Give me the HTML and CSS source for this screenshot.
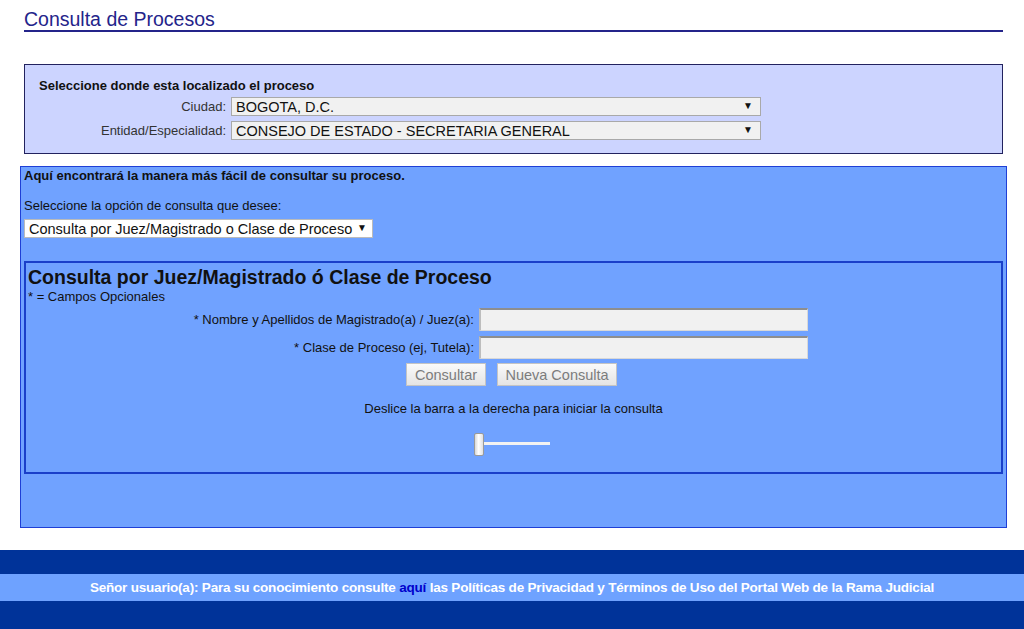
FILE: index.html
```html
<!DOCTYPE html>
<html lang="es">

<head>
    <meta charset="UTF-8">
    <meta name="viewport" content="width=device-width, initial-scale=1.0">
    <title>Consulta de Procesos</title>
    <link rel="stylesheet" href="styles.css">
</head>

<body>
    <div class="page">
        <h1 class="page-title">Consulta de Procesos</h1>

        <div class="location-box">
            <div class="location-title">Seleccione donde esta localizado el proceso</div>
            <div class="location-grid">
                <label for="ciudad">Ciudad:</label>
                <div class="select-wrap">
                    <select id="ciudad" class="big-select">
                        <option>BOGOTA, D.C.</option>
                    </select>
                </div>
                <label for="entidad">Entidad/Especialidad:</label>
                <div class="select-wrap">
                    <select id="entidad" class="big-select">
                        <option>CONSEJO DE ESTADO - SECRETARIA GENERAL</option>
                    </select>
                </div>
            </div>
        </div>

        <div class="query-box">
            <div class="query-intro">Aquí encontrará la manera más fácil de consultar su proceso.</div>
            <div class="query-option">Seleccione la opción de consulta que desee:</div>
            <div class="select-wrap option-wrap">
                <select class="option-select">
                    <option>Consulta por Juez/Magistrado o Clase de Proceso</option>
                </select>
            </div>

            <div class="judge-panel">
                <h2 class="judge-title">Consulta por Juez/Magistrado ó Clase de Proceso</h2>
                <div class="optional-note">* = Campos Opcionales</div>
                <div class="judge-grid">
                    <label for="nombre">* Nombre y Apellidos de Magistrado(a) / Juez(a):</label>
                    <input type="text" id="nombre">
                    <label for="clase">* Clase de Proceso (ej, Tutela):</label>
                    <input type="text" id="clase">
                </div>
                <div class="judge-actions">
                    <button type="button" disabled>Consultar</button>
                    <button type="button" disabled>Nueva Consulta</button>
                </div>
                <div class="slide-hint">Deslice la barra a la derecha para iniciar la consulta</div>
                <div class="slider">
                    <div class="slider-track"></div>
                    <div class="slider-thumb"></div>
                </div>
            </div>
        </div>
    </div>

    <div class="footer">
        <div class="footer-band"></div>
        <div class="footer-note">Señor usuario(a): Para su conocimiento consulte <a href="#">aquí</a> las Políticas de Privacidad y Términos de Uso del Portal Web de la Rama Judicial</div>
        <div class="footer-band bottom"></div>
    </div>
</body>

</html>
```

FILE: styles.css
```css
body {
    margin: 0;
    font-family: "Liberation Sans", Arial, sans-serif;
    font-size: 13px;
    color: #111;
    background-color: #ffffff;
}

.page {
    padding: 0 17px 0 20px;
}

.page-title {
    margin: 0 4px;
    padding-top: 9px;
    font-size: 19.5px;
    line-height: 21px;
    font-weight: normal;
    color: #24248a;
    border-bottom: 2px solid #24248a;
}

.location-box {
    margin: 32px 4px 0;
    padding: 14px 14px 13px;
    background-color: #ccd4ff;
    border: 1px solid #22225e;
}

.location-title {
    font-weight: bold;
    line-height: 14px;
    margin-bottom: 4px;
}

.location-grid {
    display: grid;
    grid-template-columns: 187px 530px;
    column-gap: 5px;
    row-gap: 5px;
    align-items: center;
}

.location-grid label {
    text-align: right;
    color: #333;
}

.select-wrap {
    position: relative;
}

.select-wrap::after {
    content: "\25BC";
    position: absolute;
    right: 8px;
    top: 3px;
    font-size: 10px;
    color: #111;
    pointer-events: none;
}

select {
    -webkit-appearance: none;
    appearance: none;
    font-family: "Liberation Sans", Arial, sans-serif;
    color: #111;
    background-color: #f1f1f1;
    border: 1px solid #a9a9a9;
    border-radius: 0;
}

.big-select {
    width: 100%;
    height: 19px;
    font-size: 14.5px;
    padding: 0 4px;
}

.query-box {
    margin-top: 12px;
    height: 358px;
    padding: 2px 3px 0;
    background-color: #70a2ff;
    border: 1px solid #1f3fd6;
}

.query-intro {
    font-weight: bold;
    line-height: 14px;
}

.query-option {
    margin-top: 16px;
    line-height: 14px;
}

.option-wrap {
    width: 349px;
    margin-top: 6px;
}

.option-wrap::after {
    right: 6px;
}

.option-select {
    width: 100%;
    height: 19px;
    font-size: 14.5px;
    padding: 0 4px;
    background-color: #ffffff;
    border-color: #bbb;
}

.judge-panel {
    margin-top: 23px;
    height: 209px;
    padding: 0 2px;
    border: 2px solid #1a3fc9;
}

.judge-title {
    margin: 2px 0 0;
    font-size: 19.5px;
    line-height: 24px;
    color: #111;
}

.optional-note {
    margin-top: 1px;
    line-height: 14px;
}

.judge-grid {
    display: grid;
    grid-template-columns: 446px 329px;
    column-gap: 5px;
    row-gap: 5px;
    align-items: center;
    margin-top: 4px;
}

.judge-grid label {
    text-align: right;
    color: #111;
}

.judge-grid input {
    box-sizing: border-box;
    height: 23px;
    margin: 0;
    background-color: #f1f1f1;
    border: 1px solid #d8d8d8;
    border-top: 2px solid #8e8e8e;
    border-left: 2px solid #bdbdbd;
}

.judge-actions {
    display: flex;
    justify-content: center;
    gap: 11px;
    margin-top: 4px;
    padding-right: 4px;
}

.judge-actions button {
    height: 23px;
    padding: 0 6px;
    font-family: "Liberation Sans", Arial, sans-serif;
    font-size: 14.5px;
    color: #7c7c7c;
    background: linear-gradient(#fafafa, #e4e4e4);
    border: 1px solid #c4c4c4;
    border-radius: 0;
}

.judge-actions button:first-child {
    width: 80px;
}

.judge-actions button:last-child {
    width: 120px;
}

.slide-hint {
    margin-top: 16px;
    text-align: center;
    line-height: 14px;
}

.slider {
    position: relative;
    width: 76px;
    height: 23px;
    margin: 17px auto 0;
    left: -2px;
}

.slider-track {
    position: absolute;
    left: 8px;
    right: 0;
    top: 9px;
    height: 3px;
    background-color: #f2f2f2;
}

.slider-thumb {
    position: absolute;
    left: 0;
    top: 0;
    width: 8px;
    height: 21px;
    background: linear-gradient(90deg, #d8d8d8, #ffffff 45%, #e0e0e0);
    border: 1px solid #9a9a9a;
    border-radius: 2px;
}

.footer {
    margin-top: 22px;
}

.footer-band {
    height: 24px;
    background-color: #003399;
}

.footer-band.bottom {
    height: 28px;
}

.footer-note {
    height: 27px;
    line-height: 27px;
    text-align: center;
    font-size: 13.5px;
    font-weight: bold;
    color: #ffffff;
    background-color: #6ea2ff;
    letter-spacing: -0.2px;
}

.footer-note a {
    color: #0000cc;
    text-decoration: none;
}
```
